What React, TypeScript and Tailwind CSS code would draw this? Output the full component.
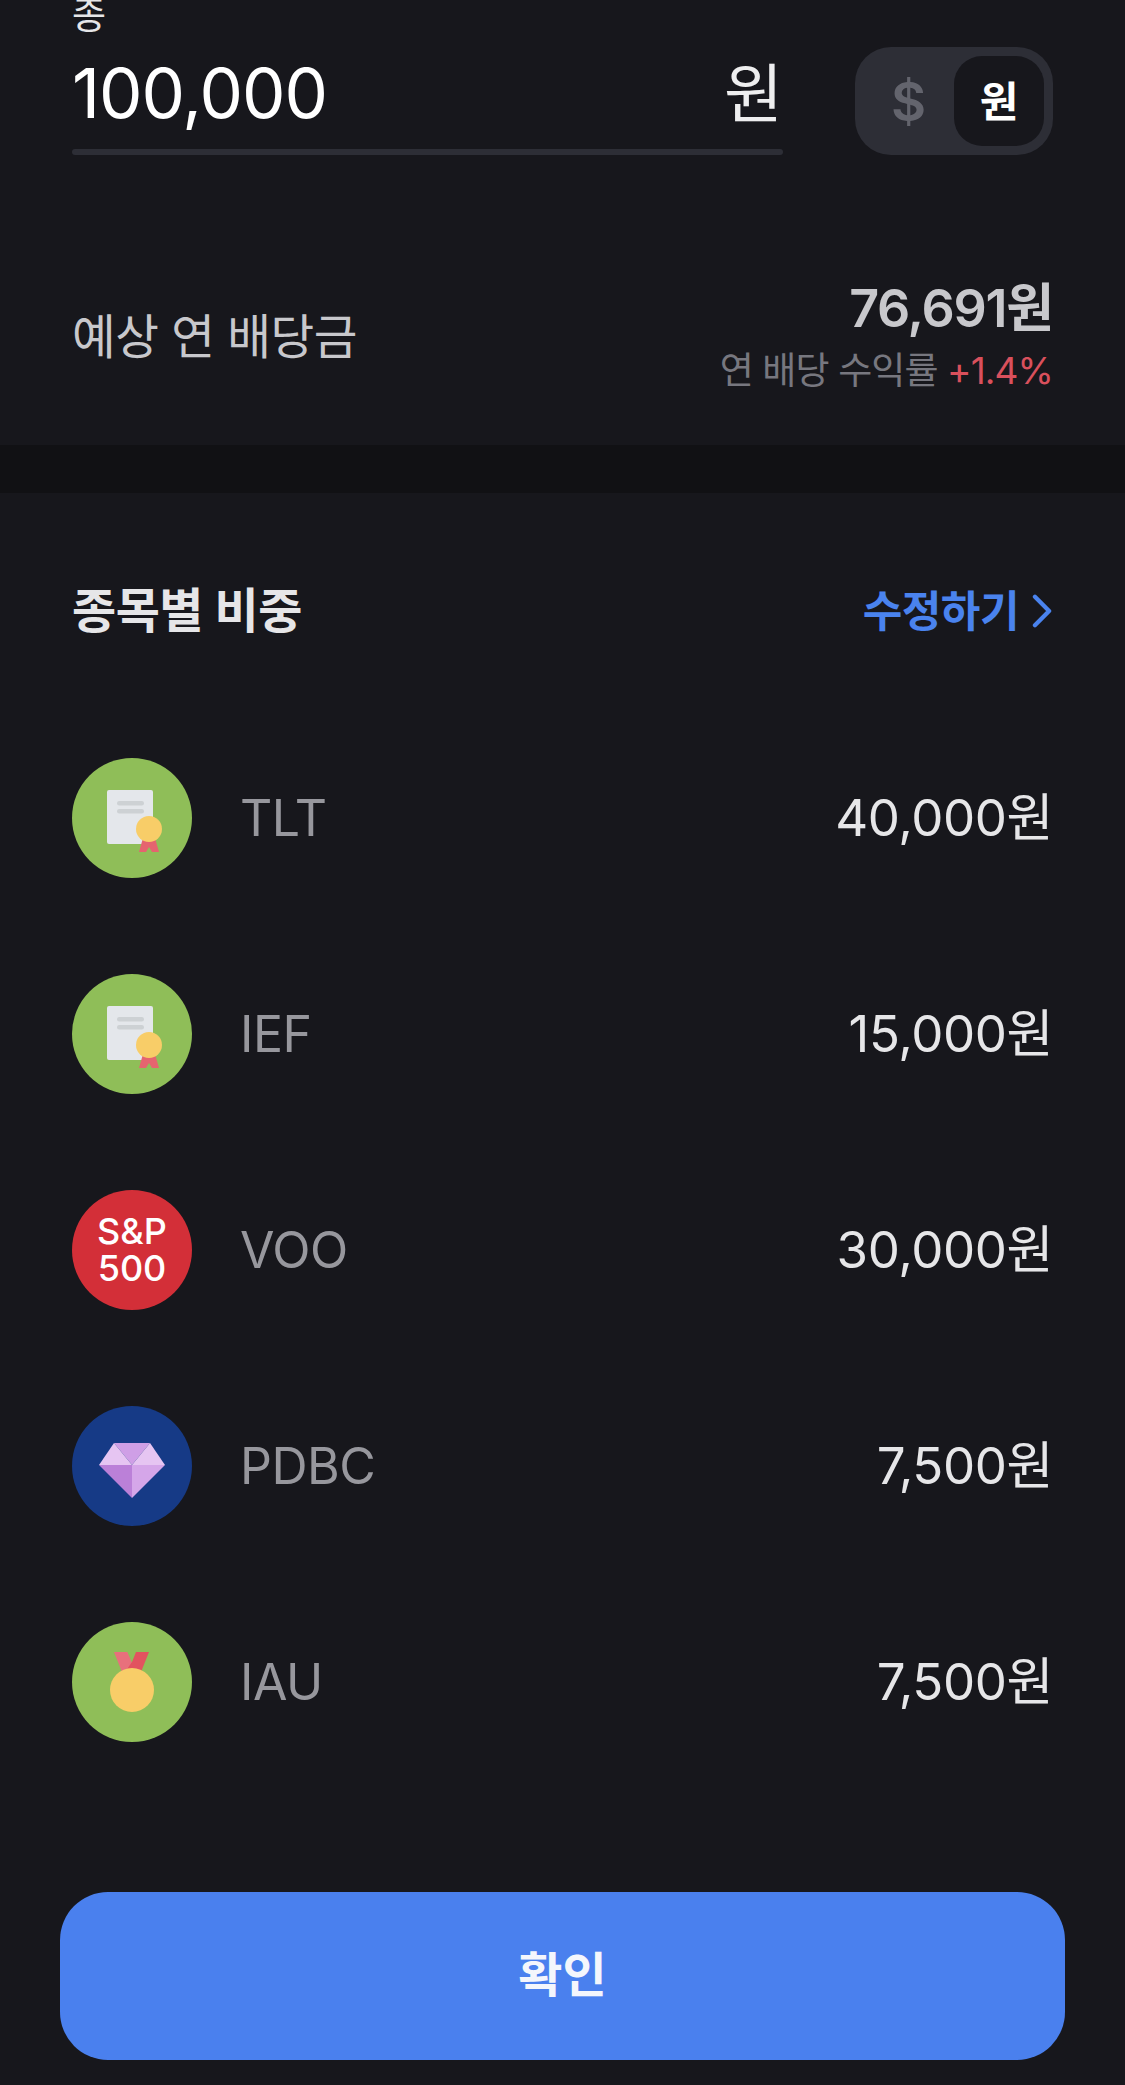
import React from "react";

const FONT = "font-['Inter','Noto_Sans_CJK_KR',sans-serif]";

function BondIcon() {
  return (
    <svg viewBox="0 0 120 120" className="h-[120px] w-[120px]">
      <circle cx="60" cy="60" r="60" fill="#8fbe58" />
      <rect x="35" y="32" width="46" height="54" rx="2" fill="#e4e7eb" />
      <rect x="45" y="43" width="27" height="4.5" rx="2.2" fill="#cdd1d4" />
      <rect x="45" y="51" width="27" height="4.5" rx="2.2" fill="#cdd1d4" />
      <path d="M71 80 H83 L87 94 H80 L77 89 L74 94 H67 Z" fill="#e5646f" />
      <circle cx="77" cy="71" r="13" fill="#f8cd68" />
    </svg>
  );
}

function GemIcon() {
  return (
    <svg viewBox="0 0 120 120" className="h-[120px] w-[120px]">
      <circle cx="60" cy="60" r="60" fill="#163a86" />
      <path d="M42 37 H78 L60 59 Z" fill="#cf9fe6" />
      <path d="M42 37 L60 59 H27 Z" fill="#e6c5f2" />
      <path d="M78 37 L93 59 H60 Z" fill="#e6c5f2" />
      <path d="M27 59 H60 V92 Z" fill="#bb80d8" />
      <path d="M93 59 H60 V92 Z" fill="#d5a6e9" />
    </svg>
  );
}

function MedalIcon() {
  return (
    <svg viewBox="0 0 120 120" className="h-[120px] w-[120px]">
      <circle cx="60" cy="60" r="60" fill="#8fbe58" />
      <path d="M42 30 H55.300 L64 50 H50 Z" fill="#e8707c" />
      <path d="M64 30 H77 L69 50 H53 L60 40 Z" fill="#e2535f" />
      <circle cx="60" cy="68" r="22" fill="#f8cd68" />
    </svg>
  );
}

function SpIcon() {
  return (
    <div className="flex h-[120px] w-[120px] flex-col items-center justify-center rounded-full bg-[#d32f38] text-[36px] font-medium leading-[37px] text-white">
      <span>S&amp;P</span>
      <span>500</span>
    </div>
  );
}

const holdings = [
  { name: "TLT", amount: "40,000원", icon: <BondIcon /> },
  { name: "IEF", amount: "15,000원", icon: <BondIcon /> },
  { name: "VOO", amount: "30,000원", icon: <SpIcon /> },
  { name: "PDBC", amount: "7,500원", icon: <GemIcon /> },
  { name: "IAU", amount: "7,500원", icon: <MedalIcon /> },
];

export default function App() {
  return (
    <main className={`${FONT} flex h-[2085px] w-[1125px] flex-col overflow-hidden bg-[#17171c]`}>
      {/* 입력 영역 */}
      <section className="px-[72px]">
        <div className="-mt-[7px] h-[46px] text-[37px] leading-[46px] text-[#e6e6e8]">종</div>
        <div className="mt-[8px] flex items-end gap-[72px]">
          <div className="w-[711px]">
            <div className="flex h-[72px] items-center justify-between pt-[2px] text-[69px] text-white">
              <span className="tracking-[-1px]">100,000</span>
              <span className="text-[64px] text-[#eeeeef]">원</span>
            </div>
            <div className="mt-[20px] h-[6px] rounded-full bg-[#2d2e36]" />
          </div>
          <div className="flex h-[108px] w-[198px] items-center justify-between rounded-[36px] bg-[#2d2e36] pl-[36px] pr-[9px]">
            <span className="text-[54px] font-semibold text-[#63646d]">$</span>
            <span className="flex h-[90px] w-[90px] items-center justify-center rounded-[28px] bg-[#17171c] text-[42px] font-bold text-white">원</span>
          </div>
        </div>

        <div className="mt-[124px] flex items-center justify-between">
          <span className="text-[47.500px] tracking-[-0.5px] text-[#c8c8cc]">예상 연 배당금</span>
          <div className="flex flex-col items-end">
            <span className="text-[52px] font-semibold leading-[60px] tracking-[-1.2px] text-[#c8c8cc]">76,691원</span>
            <span className="mt-[8px] text-[37px] leading-[48px] tracking-[-0.9px] text-[#77777f]">
              연 배당 수익률 <span className="text-[#d9505c]">+1.4%</span>
            </span>
          </div>
        </div>
      </section>

      <div className="mt-[50px] h-[48px] shrink-0 bg-[#111114]" />

      {/* 종목별 비중 */}
      <section className="flex-1 px-[72px]">
        <div className="mt-[89px] flex h-[58px] items-center justify-between">
          <span className="text-[48px] font-semibold tracking-[-0.5px] text-[#e6e6e8]">종목별 비중</span>
          <span className="flex items-center gap-[13px] text-[43px] font-semibold tracking-[-0.5px] text-[#4a83ee]">
            수정하기
            <svg viewBox="0 0 22 36" className="h-[34px] w-[21px]" fill="none" stroke="#4a83ee" strokeWidth="4.5" strokeLinecap="round" strokeLinejoin="round">
              <path d="M3 3 L18 18 L3 33" />
            </svg>
          </span>
        </div>
        <ul className="mt-[118px] flex flex-col gap-[96px]">
          {holdings.map((h) => (
            <li key={h.name} className="flex h-[120px] items-center">
              {h.icon}
              <span className="ml-[48px] flex-1 text-[50px] tracking-[-0.5px] text-[#97979d]">{h.name}</span>
              <span className="text-[51px] tracking-[-0.4px] text-[#e6e6e8]">{h.amount}</span>
            </li>
          ))}
        </ul>
      </section>

      <div className="mb-[25px] px-[60px]">
        <button className="flex h-[168px] w-full items-center justify-center rounded-[48px] bg-[#4a80ee] pb-[2px] text-[48px] font-semibold text-[#f4f6fc]">
          확인
        </button>
      </div>
    </main>
  );
}
